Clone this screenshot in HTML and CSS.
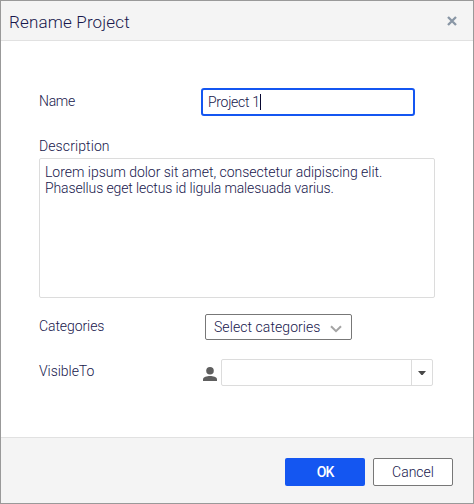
FILE: index.html
```html
<!DOCTYPE html>
<html lang="en">
<head>
<meta charset="utf-8">
<title>Rename Project</title>
<link rel="stylesheet" href="styles.css">
</head>
<body>
<div class="dialog">
  <header class="dialog-header">
    <h1><span class="title-text">Rename Project</span></h1>
    <svg class="close" width="10" height="10" viewBox="0 0 10 10"><path d="M1 1 9 9M9 1 1 9"/></svg>
  </header>
  <main class="dialog-body">
    <div class="row name-row">
      <span class="label name-label">Name</span>
      <div class="name-input"><span class="name-value">Project 1</span><i class="caret"></i></div>
    </div>
    <div class="label description-label"><span>Description</span></div>
    <div class="description"><span class="line-one">Lorem ipsum dolor sit amet, consectetur adipiscing elit.</span><br><span class="line-two">Phasellus eget lectus id ligula malesuada varius.</span></div>
    <div class="row categories-row">
      <span class="label categories-label">Categories</span>
      <div class="categories-select"><span>Select categories</span>
        <svg width="12" height="8" viewBox="0 0 12 8"><path d="M1 1.2 6 6.2 11 1.2"/></svg>
      </div>
    </div>
    <div class="row visible-row">
      <span class="label visible-label">VisibleTo</span>
      <svg class="person" width="14" height="14" viewBox="0 0 14 14"><circle cx="7" cy="3.8" r="3.8"/><path d="M0 14V12.2C0 10 4 9 7 9S14 10 14 12.2V14Z"/></svg>
      <div class="combo"><div class="combo-value"></div><div class="combo-toggle"><svg width="8" height="4" viewBox="0 0 8 4"><path d="M0 0H8L4.6 4H3.4Z"/></svg></div></div>
    </div>
  </main>
  <footer class="dialog-footer">
    <div class="button primary"><span>OK</span></div>
    <div class="button secondary"><span>Cancel</span></div>
  </footer>
</div>
</body>
</html>
```
FILE: styles.css
```css
* { box-sizing: border-box; }
body { margin: 0; font: 14px/16px Roboto, "Liberation Sans", sans-serif; font-weight: 300; color: #17174c; background: #fff; }
svg { display: block; flex: none; }
span { white-space: nowrap; }
.dialog { width: 474px; height: 504px; border: 1px solid #999; display: flex; flex-direction: column; }
.dialog-header { height: 40px; background: #f4f4f4; border-bottom: 1px solid #e1e1e1; display: flex; align-items: center; justify-content: space-between; padding: 0 16px 0 8px; }
h1 { margin: 2px 0 0; font-size: 17px; line-height: 22px; font-weight: 300; letter-spacing: .17px; }
.close { stroke: #8996a5; stroke-width: 2.3; fill: none; }
.dialog-body { flex: 1; padding: 47px 38px 0; }
.row { display: flex; align-items: center; }
.label { width: 162px; flex: none; letter-spacing: .1px; }
.name-label { margin-top: -2px; letter-spacing: -.3px; }
.name-row { height: 28px; }
.name-input { width: 214px; height: 28px; border: 2px solid #1456f1; border-radius: 3px; display: flex; align-items: center; padding-left: 5px; letter-spacing: -.3px; }
.caret { width: 1px; height: 16px; background: #080830; }
.description-label { margin-top: 22px; }
.description { width: 396px; height: 140px; margin-top: 4px; padding: 5px; border: 1px solid #dcdcdc; border-radius: 2px; }
.line-one { letter-spacing: -.02px; }
.line-two { letter-spacing: -.12px; }
.categories-row { height: 26px; margin-top: 16px; }
.categories-label { width: 166px; margin-top: -2px; letter-spacing: -.08px; }
.categories-select { width: 147px; height: 26px; border: 1px solid #777; border-radius: 2px; display: flex; align-items: center; justify-content: space-between; padding: 0 9px 0 8px; letter-spacing: .07px; }
.categories-select svg { fill: none; stroke: #a4a4a4; stroke-width: 2; margin-top: 3px; }
.visible-row { height: 27px; margin-top: 19px; }
.visible-label { width: 164px; margin-top: -3px; letter-spacing: -.05px; }
.person { fill: #5f5f5f; margin-top: 3px; }
.combo { width: 212px; height: 27px; margin-left: 4px; border: 1px solid #dcdcdc; border-radius: 2px; display: flex; }
.combo-value { flex: 1; }
.combo-toggle { width: 21px; border-left: 1px solid #dcdcdc; display: flex; align-items: center; justify-content: center; fill: #484848; }
.dialog-footer { height: 66px; background: #f4f4f4; border-top: 1px solid #e1e1e1; display: flex; justify-content: flex-end; gap: 8px; padding: 20px 20px 0 0; }
.button { width: 80px; height: 28px; border-radius: 2px; display: flex; align-items: center; justify-content: center; }
.primary { background: #1456f1; color: #fff; font-weight: 500; letter-spacing: -.9px; }
.secondary { background: #fff; border: 1px solid #777; letter-spacing: 0; }
```
